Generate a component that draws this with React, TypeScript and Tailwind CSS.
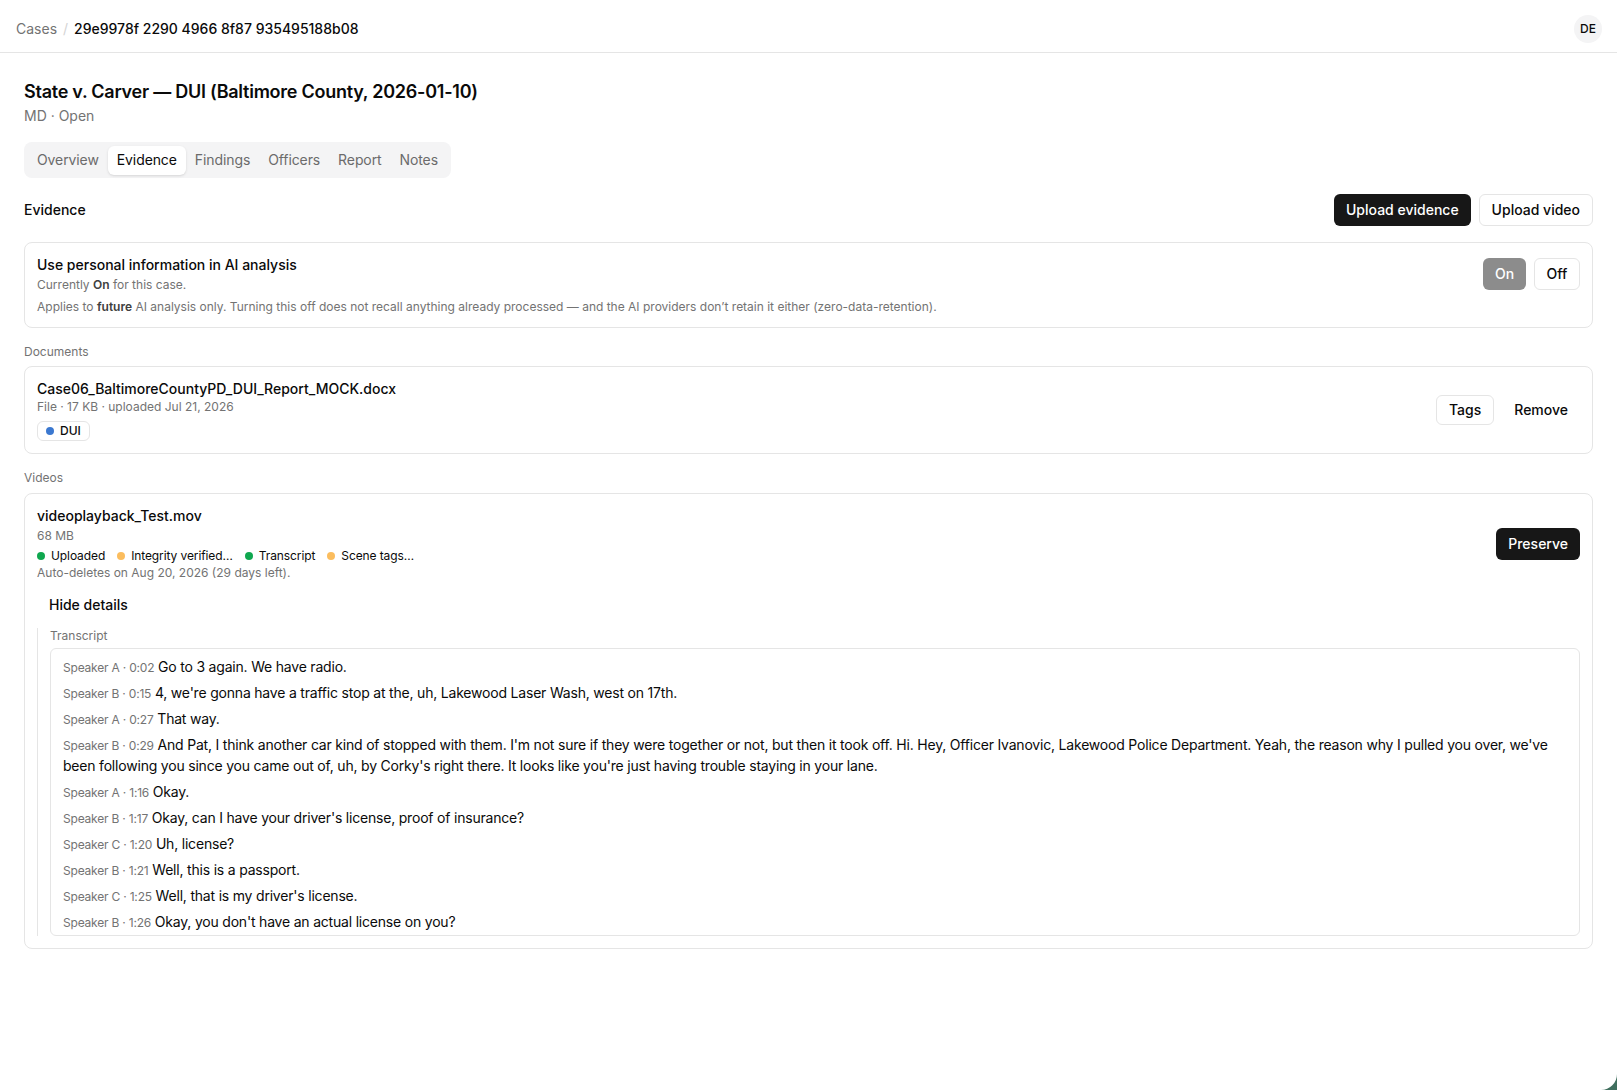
import React from "react";

type Line = { speaker: string; time: string; text: string };

const transcript: Line[] = [
  { speaker: "Speaker A", time: "0:02", text: "Go to 3 again. We have radio." },
  { speaker: "Speaker B", time: "0:15", text: "4, we're gonna have a traffic stop at the, uh, Lakewood Laser Wash, west on 17th." },
  { speaker: "Speaker A", time: "0:27", text: "That way." },
  {
    speaker: "Speaker B",
    time: "0:29",
    text: "And Pat, I think another car kind of stopped with them. I'm not sure if they were together or not, but then it took off. Hi. Hey, Officer Ivanovic, Lakewood Police Department. Yeah, the reason why I pulled you over, we've been following you since you came out of, uh, by Corky's right there. It looks like you're just having trouble staying in your lane.",
  },
  { speaker: "Speaker A", time: "1:16", text: "Okay." },
  { speaker: "Speaker B", time: "1:17", text: "Okay, can I have your driver's license, proof of insurance?" },
  { speaker: "Speaker C", time: "1:20", text: "Uh, license?" },
  { speaker: "Speaker B", time: "1:21", text: "Well, this is a passport." },
  { speaker: "Speaker C", time: "1:25", text: "Well, that is my driver's license." },
  { speaker: "Speaker B", time: "1:26", text: "Okay, you don't have an actual license on you?" },
];

const tabs = ["Overview", "Evidence", "Findings", "Officers", "Report", "Notes"];

const statuses = [
  { label: "Uploaded", done: true },
  { label: "Integrity verified…", done: false },
  { label: "Transcript", done: true },
  { label: "Scene tags…", done: false },
];

export default function App() {
  return (
    <div
      className="relative min-h-screen bg-white text-[#0a0a0a] overflow-hidden"
      style={{ fontFamily: "Inter, 'Liberation Sans', sans-serif" }}
    >
      {/* top bar */}
      <header className="h-[53px] border-b border-[#e5e5e5] pl-4 pr-[15px] pt-[6px] flex items-center justify-between">
        <nav className="flex items-center gap-1.5 text-sm">
          <span className="text-[#737373]">Cases</span>
          <span className="text-[#d4d4d4]">/</span>
          <span className="font-medium">29e9978f 2290 4966 8f87 935495188b08</span>
        </nav>
        <div className="w-7 h-7 rounded-full bg-[#f4f4f5] flex items-center justify-center text-xs font-medium">
          DE
        </div>
      </header>

      <main className="px-6 pt-[25px]">
        <h1 className="text-lg font-semibold leading-7 tracking-[-0.25px]">
          State v. Carver — DUI (Baltimore County, 2026-01-10)
        </h1>
        <p className="text-sm text-[#737373] leading-5">MD · Open</p>

        <div className="mt-4 inline-flex h-9 items-center rounded-lg bg-[#f4f4f5] p-1">
          {tabs.map((t) => (
            <button
              key={t}
              className={
                t === "Evidence"
                  ? "h-[29px] px-[9px] rounded-md bg-white text-sm tracking-[-0.1px] text-[#0a0a0a] shadow-sm"
                  : "h-[29px] px-[9px] rounded-md text-sm tracking-[-0.1px] text-[#6b6b6b]"
              }
            >
              {t}
            </button>
          ))}
        </div>

        <div className="mt-4 flex items-center justify-between">
          <h2 className="text-sm font-medium">Evidence</h2>
          <div className="flex gap-2">
            <button className="h-8 px-3 rounded-md bg-[#171717] text-white text-sm font-medium">
              Upload evidence
            </button>
            <button className="h-8 px-3 rounded-md border border-[#e5e5e5] bg-white text-sm font-medium">
              Upload video
            </button>
          </div>
        </div>

        <div className="mt-4 flex flex-col gap-4">
          {/* personal info toggle */}
          <section className="rounded-lg border border-[#e5e5e5] p-3 flex justify-between items-start">
            <div>
              <p className="text-sm font-medium leading-5">Use personal information in AI analysis</p>
              <p className="text-xs text-[#737373] leading-4 mt-0.5">
                Currently <span className="font-semibold text-[#404040]">On</span> for this case.
              </p>
              <p className="text-xs text-[#737373] leading-4 mt-1.5">
                Applies to <span className="font-semibold text-[#404040]">future</span> AI analysis only. Turning this off
                does not recall anything already processed — and the AI providers don’t retain it either
                (zero-data-retention).
              </p>
            </div>
            <div className="flex gap-2 mt-[3px]">
              <button className="h-8 w-[43px] rounded-md bg-[#8c8c8c] text-white text-sm font-medium">On</button>
              <button className="h-8 w-[46px] rounded-md border border-[#e5e5e5] bg-white text-sm font-medium">
                Off
              </button>
            </div>
          </section>

          {/* documents */}
          <div>
            <p className="text-xs text-[#737373] leading-4 mb-1.5">Documents</p>
            <section className="rounded-lg border border-[#e5e5e5] p-3 flex justify-between items-center">
              <div>
                <p className="text-sm font-medium leading-5">Case06_BaltimoreCountyPD_DUI_Report_MOCK.docx</p>
                <p className="text-xs text-[#737373] leading-4">File · 17 KB · uploaded Jul 21, 2026</p>
                <span className="mt-1.5 inline-flex h-[20px] items-center gap-1.5 rounded-md border border-[#e5e5e5] px-2 text-xs font-medium">
                  <span className="w-2 h-2 rounded-full bg-[#3b78d0]" />
                  DUI
                </span>
              </div>
              <div className="flex items-center gap-2">
                <button className="h-[30px] px-3 rounded-md border border-[#e5e5e5] bg-white text-sm font-medium">
                  Tags
                </button>
                <button className="h-[30px] px-3 rounded-md text-sm font-medium">Remove</button>
              </div>
            </section>
          </div>

          {/* videos */}
          <div>
            <p className="text-xs text-[#737373] leading-4 mb-[7px]">Videos</p>
            <section className="rounded-lg border border-[#e5e5e5] p-3">
              <div className="flex justify-between items-center">
                <div>
                  <p className="text-sm font-medium leading-5">videoplayback_Test.mov</p>
                  <p className="text-xs text-[#737373] leading-4 mt-0.5">68 MB</p>
                  <div className="flex items-center gap-3 mt-1 text-xs leading-4 tracking-[-0.1px]">
                    {statuses.map((s) => (
                      <span key={s.label} className="flex items-center gap-1.5">
                        <span
                          className={
                            s.done ? "w-2 h-2 rounded-full bg-[#0fa74f]" : "w-2 h-2 rounded-full bg-[#fbbd5e]"
                          }
                        />
                        {s.label}
                      </span>
                    ))}
                  </div>
                  <p className="text-xs text-[#737373] leading-4 mt-px">Auto-deletes on Aug 20, 2026 (29 days left).</p>
                </div>
                <button className="h-8 px-3 rounded-md bg-[#171717] text-white text-sm font-medium">Preserve</button>
              </div>

              <button className="mt-2 h-8 px-3 rounded-md text-sm font-medium">Hide details</button>

              <div className="mt-[7px] border-l border-[#e5e5e5] pl-3">
                <p className="text-xs text-[#737373] leading-4">Transcript</p>
                <div className="mt-1 h-[288px] overflow-hidden rounded-md border border-[#e5e5e5] px-3 py-[7px] flex flex-col gap-[5px]">
                  {transcript.map((l, i) => (
                    <p key={i} className="text-sm leading-[21px] tracking-[-0.2px]">
                      <span className="text-xs text-[#737373]">
                        {l.speaker} · {l.time}
                      </span>{" "}
                      {l.text}
                    </p>
                  ))}
                </div>
              </div>
            </section>
          </div>
        </div>
      </main>

      {/* desktop peeking past the rounded window corner */}
      <svg className="absolute bottom-0 right-0" width="16" height="16" viewBox="0 0 16 16">
        <path d="M16 0 V16 H0 A16 16 0 0 0 16 0 Z" fill="#3f6f5e" />
      </svg>
    </div>
  );
}
